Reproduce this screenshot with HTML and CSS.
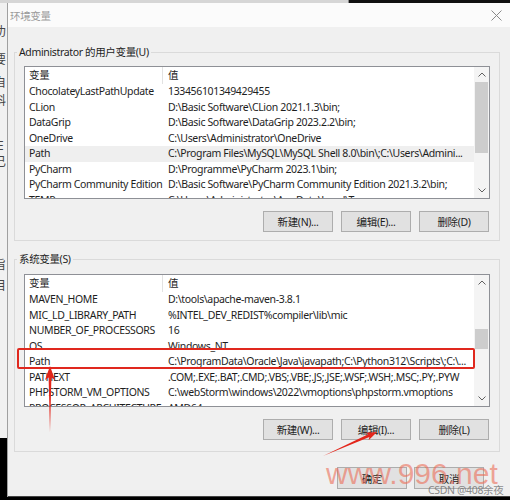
FILE: index.html
```html
<!DOCTYPE html>
<html>
<head>
<meta charset="utf-8">
<title>环境变量</title>
<link rel="stylesheet" href="styles.css">
</head>
<body>
<div class="screen">
	<div class="top_strip"><div class="top_light"></div><div class="top_dark"></div></div>
	<div class="main">
		<!-- window lying behind the dialog -->
		<div class="behind">
			<span class="c1">叻</span>
			<span class="c2">要</span>
			<span class="c3">自</span>
			<span class="c4">科</span>
			<span class="c5">E</span>
			<span class="c6">已</span>
			<span class="c7">旨</span>
			<span class="c8">目</span>
		</div>
		<div class="dialog">
			<div class="titlebar">
				<span class="title">环境变量</span>
				<svg class="close" width="11" height="11" viewBox="0 0 11 11"><path d="M0.5 0.5 L10.5 10.5 M10.5 0.5 L0.5 10.5" stroke="#8a8a8a" stroke-width="1" fill="none"/></svg>
			</div>
			<div class="content">
				<fieldset class="group group_user">
					<legend>Administrator 的用户变量(U)</legend>
					<div class="listview">
						<div class="rows">
							<div class="row head"><span>变量</span><span>值</span></div>
							<div class="row"><span>ChocolateyLastPathUpdate</span><span>133456101349429455</span></div>
							<div class="row"><span>CLion</span><span>D:\Basic Software\CLion 2021.1.3\bin;</span></div>
							<div class="row"><span>DataGrip</span><span>D:\Basic Software\DataGrip 2023.2.2\bin;</span></div>
							<div class="row"><span>OneDrive</span><span>C:\Users\Administrator\OneDrive</span></div>
							<div class="row sel"><span>Path</span><span>C:\Program Files\MySQL\MySQL Shell 8.0\bin\;C:\Users\Admini...</span></div>
							<div class="row"><span>PyCharm</span><span>D:\Programme\PyCharm 2023.1\bin;</span></div>
							<div class="row"><span>PyCharm Community Edition</span><span>D:\Basic Software\PyCharm Community Edition 2021.3.2\bin;</span></div>
							<div class="row"><span>TEMP</span><span>C:\Users\Administrator\AppData\Local\Temp</span></div>
						</div>
						<div class="scrollbar">
							<div class="sb_btn"><svg width="8" height="5" viewBox="0 0 8 5"><path d="M0.5 4.5 L4 1 L7.5 4.5" stroke="#606060" fill="none"/></svg></div>
							<div class="sb_track"><div class="thumb thumb_user"></div></div>
							<div class="sb_btn"><svg width="8" height="5" viewBox="0 0 8 5"><path d="M0.5 0.5 L4 4 L7.5 0.5" stroke="#606060" fill="none"/></svg></div>
						</div>
					</div>
					<div class="btn_row">
						<button class="btn" type="button">新建(N)...</button>
						<button class="btn" type="button">编辑(E)...</button>
						<button class="btn" type="button">删除(D)</button>
					</div>
				</fieldset>

				<fieldset class="group group_sys">
					<legend>系统变量(S)</legend>
					<div class="listview">
						<div class="rows">
							<div class="row head"><span>变量</span><span>值</span></div>
							<div class="row"><span>MAVEN_HOME</span><span>D:\tools\apache-maven-3.8.1</span></div>
							<div class="row"><span>MIC_LD_LIBRARY_PATH</span><span>%INTEL_DEV_REDIST%compiler\lib\mic</span></div>
							<div class="row"><span>NUMBER_OF_PROCESSORS</span><span>16</span></div>
							<div class="row"><span>OS</span><span>Windows_NT</span></div>
							<div class="row"><span>Path</span><span>C:\ProgramData\Oracle\Java\javapath;C:\Python312\Scripts\;C:\...</span></div>
							<div class="row"><span>PATHEXT</span><span>.COM;.EXE;.BAT;.CMD;.VBS;.VBE;.JS;.JSE;.WSF;.WSH;.MSC;.PY;.PYW</span></div>
							<div class="row"><span>PHPSTORM_VM_OPTIONS</span><span>C:\webStorm\windows\2022\vmoptions\phpstorm.vmoptions</span></div>
							<div class="row"><span>PROCESSOR_ARCHITECTURE</span><span>AMD64</span></div>
						</div>
						<div class="scrollbar">
							<div class="sb_btn"><svg width="8" height="5" viewBox="0 0 8 5"><path d="M0.5 4.5 L4 1 L7.5 4.5" stroke="#606060" fill="none"/></svg></div>
							<div class="sb_track"><div class="thumb thumb_sys"></div></div>
							<div class="sb_btn"><svg width="8" height="5" viewBox="0 0 8 5"><path d="M0.5 0.5 L4 4 L7.5 0.5" stroke="#606060" fill="none"/></svg></div>
						</div>
					</div>
					<div class="btn_row">
						<button class="btn" type="button">新建(W)...</button>
						<button class="btn" type="button">编辑(I)...</button>
						<button class="btn" type="button">删除(L)</button>
					</div>
				</fieldset>

				<div class="footer">
					<button class="btn" type="button">确定</button>
					<button class="btn" type="button">取消</button>
				</div>
			</div>
		</div>
	</div>

	<!-- red markup drawn on top -->
	<div class="mark_box"></div>
	<svg class="arrows" width="510" height="500" viewBox="0 0 510 500">
		<polygon points="50,366 55,380 51.4,377.5 50,432 48.6,377.5 45,380" fill="#e3261b"/>
		<polygon points="377,432 368.6,440.2 369.4,437.1 323,456 368.2,434.3 365.4,432.8" fill="#e3261b"/>
	</svg>
	<div class="watermark">www.996.net</div>
	<div class="csdn">CSDN @408余夜</div>
</div>
</body>
</html>
```

FILE: styles.css
```css
html, body {
	margin: 0;
	padding: 0;
}
body {
	width: 510px;
	height: 500px;
	overflow: hidden;
	background: #000;
	font-family: "Noto Sans", "Noto Sans CJK SC", sans-serif;
	font-size: 10.5px;
	letter-spacing: -0.35px;
	color: #1e1e1e;
}
.screen {
	position: relative;
	display: flex;
	flex-direction: column;
	width: 510px;
	height: 500px;
}
.top_strip {
	display: flex;
	height: 3px;
}
.top_light {
	width: 348px;
	background: #d6d6d6;
	border-right: 1px solid #8c8c8c;
}
.top_dark {
	flex: 1;
	background: #111;
}
.main {
	display: flex;
	height: 494px;
}

/* window behind */
.behind {
	width: 7px;
	border-right: 1px solid #a0a0a0;
	background: linear-gradient(#f1f1f1 0, #f1f1f1 435px, #000 435px);
	overflow: hidden;
	position: relative;
}
.behind span {
	position: absolute;
	left: -6px;
	font-size: 12px;
	line-height: 14px;
	color: #444;
}
.behind .c1 { top: 22px; }
.behind .c2 { top: 50px; }
.behind .c3 { top: 73px; }
.behind .c4 { top: 91px; }
.behind .c5 { top: 136px; left: -3px; }
.behind .c6 { top: 152px; }
.behind .c7 { top: 255px; }
.behind .c8 { top: 276px; }

/* dialog */
.dialog {
	flex: 1;
	display: flex;
	flex-direction: column;
	background: #f0f0f0;
	border-bottom: 1px solid #444;
}
.titlebar {
	height: 24px;
	display: flex;
	align-items: center;
	justify-content: space-between;
	padding: 0 8px 0 2px;
	background: #fbfbfb;
}
.title {
	font-size: 10.5px;
	color: #9a9a9a;
}
.content {
	padding: 17px 0 0 6px;
}

.group {
	margin: 0;
	width: 486px;
	box-sizing: border-box;
	border: 1px solid #dadada;
	padding: 0 9px 8px 9px;
}
.group legend {
	margin-left: -7px;
	padding: 0 2px;
	line-height: 16px;
	color: #1e1e1e;
}
.group_sys {
	margin-top: 10px;
	padding-bottom: 11px;
}
.group_sys .listview {
	margin-top: 7px;
}

.listview {
	display: flex;
	height: 133px;
	box-sizing: border-box;
	margin-top: 6px;
	border: 1px solid #8e9096;
	background: #fff;
}
.rows {
	flex: 1;
	overflow: hidden;
}
.row {
	display: grid;
	grid-template-columns: 138px 1fr;
	height: 15.5px;
	line-height: 15.5px;
	white-space: nowrap;
}
.row span {
	padding-left: 4px;
	overflow: hidden;
}
.row span + span {
	padding-left: 5px;
}
.row.head {
	height: 17px;
	line-height: 17px;
}
.row.head span:first-child {
	border-right: 1px solid #e2e2e2;
}
.row.sel {
	background: #efefef;
}

.scrollbar {
	width: 15px;
	display: flex;
	flex-direction: column;
	background: #f4f4f4;
}
.sb_btn {
	height: 15px;
	display: flex;
	align-items: center;
	justify-content: center;
}
.sb_track {
	flex: 1;
}
.thumb {
	margin: 0 1px;
	background: #cdcdcd;
}
.thumb_user {
	height: 71px;
}
.thumb_sys {
	margin-top: 39px;
	height: 20px;
}

.btn_row {
	display: flex;
	justify-content: flex-end;
	gap: 8px;
	margin-top: 12px;
	padding-right: 1px;
}
.btn {
	width: 70px;
	height: 21px;
	box-sizing: border-box;
	padding: 0;
	border: 1px solid #adadad;
	background: #e1e1e1;
	font-family: "Noto Sans", "Noto Sans CJK SC", sans-serif;
	font-size: 10.5px;
	letter-spacing: -0.35px;
	color: #1e1e1e;
}
.footer {
	display: flex;
	justify-content: flex-end;
	gap: 7px;
	margin-top: 15px;
	padding-right: 26px;
}
.footer .btn {
	height: 22px;
}

/* markup over the dialog */
.mark_box {
	position: absolute;
	left: 17px;
	top: 348px;
	width: 458px;
	height: 21px;
	box-sizing: border-box;
	border: 2.5px solid #e0281e;
	border-radius: 2px;
}
.arrows {
	position: absolute;
	left: 0;
	top: 0;
}
.watermark {
	position: absolute;
	left: 326px;
	top: 457px;
	font-family: "Liberation Sans", sans-serif;
	font-size: 30px;
	letter-spacing: 0;
	color: rgba(236, 110, 88, 0.6);
}
.csdn {
	position: absolute;
	left: 428px;
	top: 482px;
	font-size: 10.5px;
	color: rgba(110, 110, 110, 0.8);
}
```
